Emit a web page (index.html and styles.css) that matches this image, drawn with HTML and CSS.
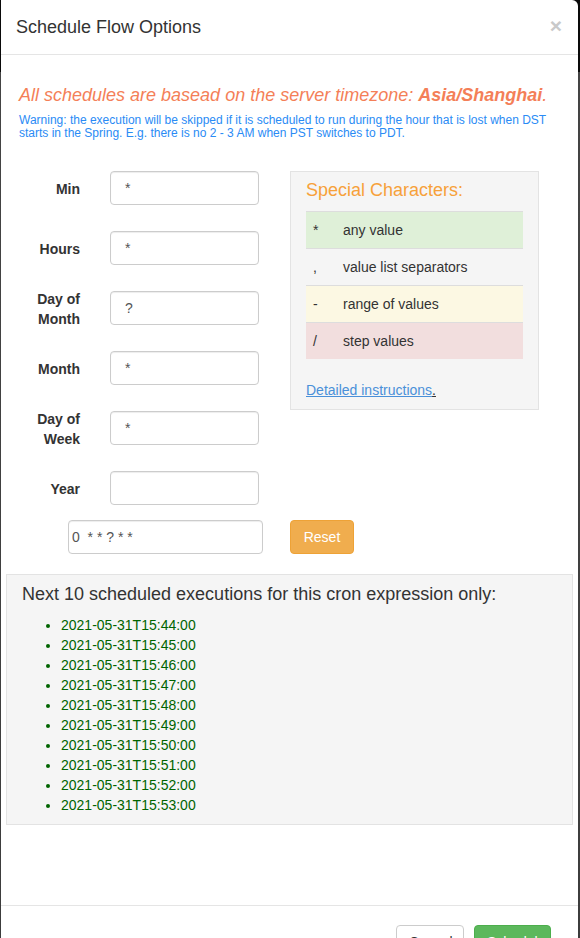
FILE: index.html
```html
<!DOCTYPE html>
<html>
<head>
<meta charset="utf-8">
<link rel="stylesheet" href="styles.css">
</head>
<body>
<div class="modal">
  <div class="modal-header">
    <h4 class="modal-title">Schedule Flow Options</h4>
    <span class="close">×</span>
  </div>
  <div class="modal-body">
    <p class="tz">All schedules are basead on the server timezone: <b>Asia/Shanghai</b>.</p>
    <p class="warn">Warning: the execution will be skipped if it is scheduled to run during the hour that is lost when DST starts in the Spring. E.g. there is no 2 - 3 AM when PST switches to PDT.</p>
    <div class="main">
      <div class="fields">
        <div class="row"><label>Min</label><input class="inp" value="*"></div>
        <div class="row"><label>Hours</label><input class="inp" value="*"></div>
        <div class="row"><label>Day of<br>Month</label><input class="inp" value="?"></div>
        <div class="row"><label>Month</label><input class="inp" value="*"></div>
        <div class="row"><label>Day of<br>Week</label><input class="inp" value="*"></div>
        <div class="row"><label>Year</label><input class="inp" value=""></div>
      </div>
      <div class="special">
        <h4 class="sp-title">Special Characters:</h4>
        <table class="sp-table">
          <tr class="ok"><td class="c">*</td><td>any value</td></tr>
          <tr><td class="c">,</td><td>value list separators</td></tr>
          <tr class="warnrow"><td class="c">-</td><td>range of values</td></tr>
          <tr class="bad"><td class="c">/</td><td>step values</td></tr>
        </table>
        <a class="link" href="#">Detailed instructions</a><span class="dot">.</span>
      </div>
    </div>
    <div class="cron-row">
      <input class="cron" value="0  * * ? * *">
      <button class="btn reset">Reset</button>
    </div>
    <div class="well">
      <h4 class="next">Next 10 scheduled executions for this cron expression only:</h4>
      <ul class="times">
        <li>2021-05-31T15:44:00</li>
        <li>2021-05-31T15:45:00</li>
        <li>2021-05-31T15:46:00</li>
        <li>2021-05-31T15:47:00</li>
        <li>2021-05-31T15:48:00</li>
        <li>2021-05-31T15:49:00</li>
        <li>2021-05-31T15:50:00</li>
        <li>2021-05-31T15:51:00</li>
        <li>2021-05-31T15:52:00</li>
        <li>2021-05-31T15:53:00</li>
      </ul>
    </div>
  </div>
  <div class="modal-footer">
    <button class="btn cancel">Cancel</button>
    <button class="btn schedule">Schedule</button>
  </div>
</div>
</body>
</html>
```
FILE: styles.css
```css
html, body {
  margin: 0;
  padding: 0;
}
body {
  background: linear-gradient(to bottom, #0a0a0a 0, #0a0a0a 72px, #444 72px, #3c3c3c 100%);
  font-family: "Liberation Sans", Arial, sans-serif;
  font-size: 14px;
  line-height: 20px;
  color: #333;
  height: 938px;
  overflow: hidden;
}
.modal {
  margin-left: 1px;
  width: 577px;
  background: #fff;
  border-radius: 0 6px 0 0;
  height: 1000px;
}
.modal-header {
  display: flex;
  justify-content: space-between;
  align-items: center;
  padding: 15px 16px 14px 15px;
  border-bottom: 1px solid #e5e5e5;
}
.modal-title {
  margin: 0;
  font-size: 18px;
  font-weight: normal;
  line-height: 25px;
  color: #333;
}
.close {
  font-size: 21px;
  font-weight: bold;
  color: #c9c9c9;
  line-height: 21px;
  margin-top: -4px;
}
.modal-body {
  padding: 13px 15px 0 15px;
}
.tz {
  margin: 16px 0 0 3px;
  font-size: 18px;
  line-height: 22px;
  font-style: italic;
  color: #f47f58;
}
.warn {
  margin: 8px 0 0 3px;
  font-size: 12px;
  line-height: 13px;
  color: #2a8bf5;
}
.main {
  display: flex;
  margin-top: 31px;
  gap: 31px;
}
.fields {
  display: flex;
  flex-direction: column;
  gap: 26px;
}
.row {
  display: flex;
  align-items: center;
  gap: 30px;
  height: 34px;
}
.row label {
  width: 64px;
  text-align: right;
  font-weight: bold;
  line-height: 20px;
  margin-top: 1px;
}
.inp, .cron {
  box-sizing: border-box;
  height: 34px;
  width: 149px;
  border: 1px solid #ccc;
  border-radius: 4px;
  padding: 6px 12px 6px 14px;
  font-family: "Liberation Sans", Arial, sans-serif;
  font-size: 14px;
  color: #555;
  box-shadow: inset 0 1px 1px rgba(0,0,0,0.075);
}
.special {
  box-sizing: border-box;
  width: 249px;
  height: 239px;
  background: #f5f5f5;
  border: 1px solid #e3e3e3;
  padding: 0 15px;
}
.sp-title {
  margin: 8px 0 11px 0;
  font-size: 18px;
  line-height: 20px;
  font-weight: normal;
  color: #f7a13a;
}
.sp-table {
  width: 217px;
  border-collapse: collapse;
}
.sp-table td {
  padding: 8px 8px 8px 7px;
  border-top: 1px solid #ddd;
  line-height: 20px;
}
.sp-table td.c {
  width: 15px;
}
.sp-table tr.ok td { background: #dff0d8; }
.sp-table tr.warnrow td { background: #fcf8e3; }
.sp-table tr.bad td { background: #f2dede; }
.link {
  display: inline-block;
  margin-top: 21px;
  color: #4a90d9;
  text-decoration: underline;
}
.dot {
  text-decoration: underline;
  color: #333;
}
.cron-row {
  display: flex;
  align-items: center;
  gap: 27px;
  margin-top: 15px;
  padding-left: 52px;
}
.cron {
  width: 195px;
  padding-left: 3px;
}
.btn {
  box-sizing: border-box;
  height: 34px;
  border-radius: 4px;
  border: 1px solid transparent;
  font-family: "Liberation Sans", Arial, sans-serif;
  font-size: 14px;
  padding: 6px 12px;
}
.reset {
  background: #f0ad4e;
  border-color: #eea236;
  color: #fff;
  width: 64px;
}
.well {
  margin: 20px -10px 0 -10px;
  background: #f5f5f5;
  border: 1px solid #e3e3e3;
  padding: 8px 15px 9px 15px;
  height: 251px;
  box-sizing: border-box;
}
.next {
  margin: 0;
  font-size: 18px;
  line-height: 22px;
  font-weight: normal;
  color: #333;
}
.times {
  margin: 10px 0 0 0;
  padding-left: 39px;
  color: #006400;
}
.times li {
  line-height: 20px;
}
.modal-footer {
  margin-top: 80px;
  border-top: 1px solid #e5e5e5;
  padding: 19px 27px 15px 15px;
  display: flex;
  justify-content: flex-end;
  gap: 10px;
}
.cancel {
  background: #fff;
  border-color: #ccc;
  color: #333;
  width: 68px;
}
.schedule {
  background: #5cb85c;
  border-color: #4cae4c;
  color: #fff;
  width: 77px;
}
```
